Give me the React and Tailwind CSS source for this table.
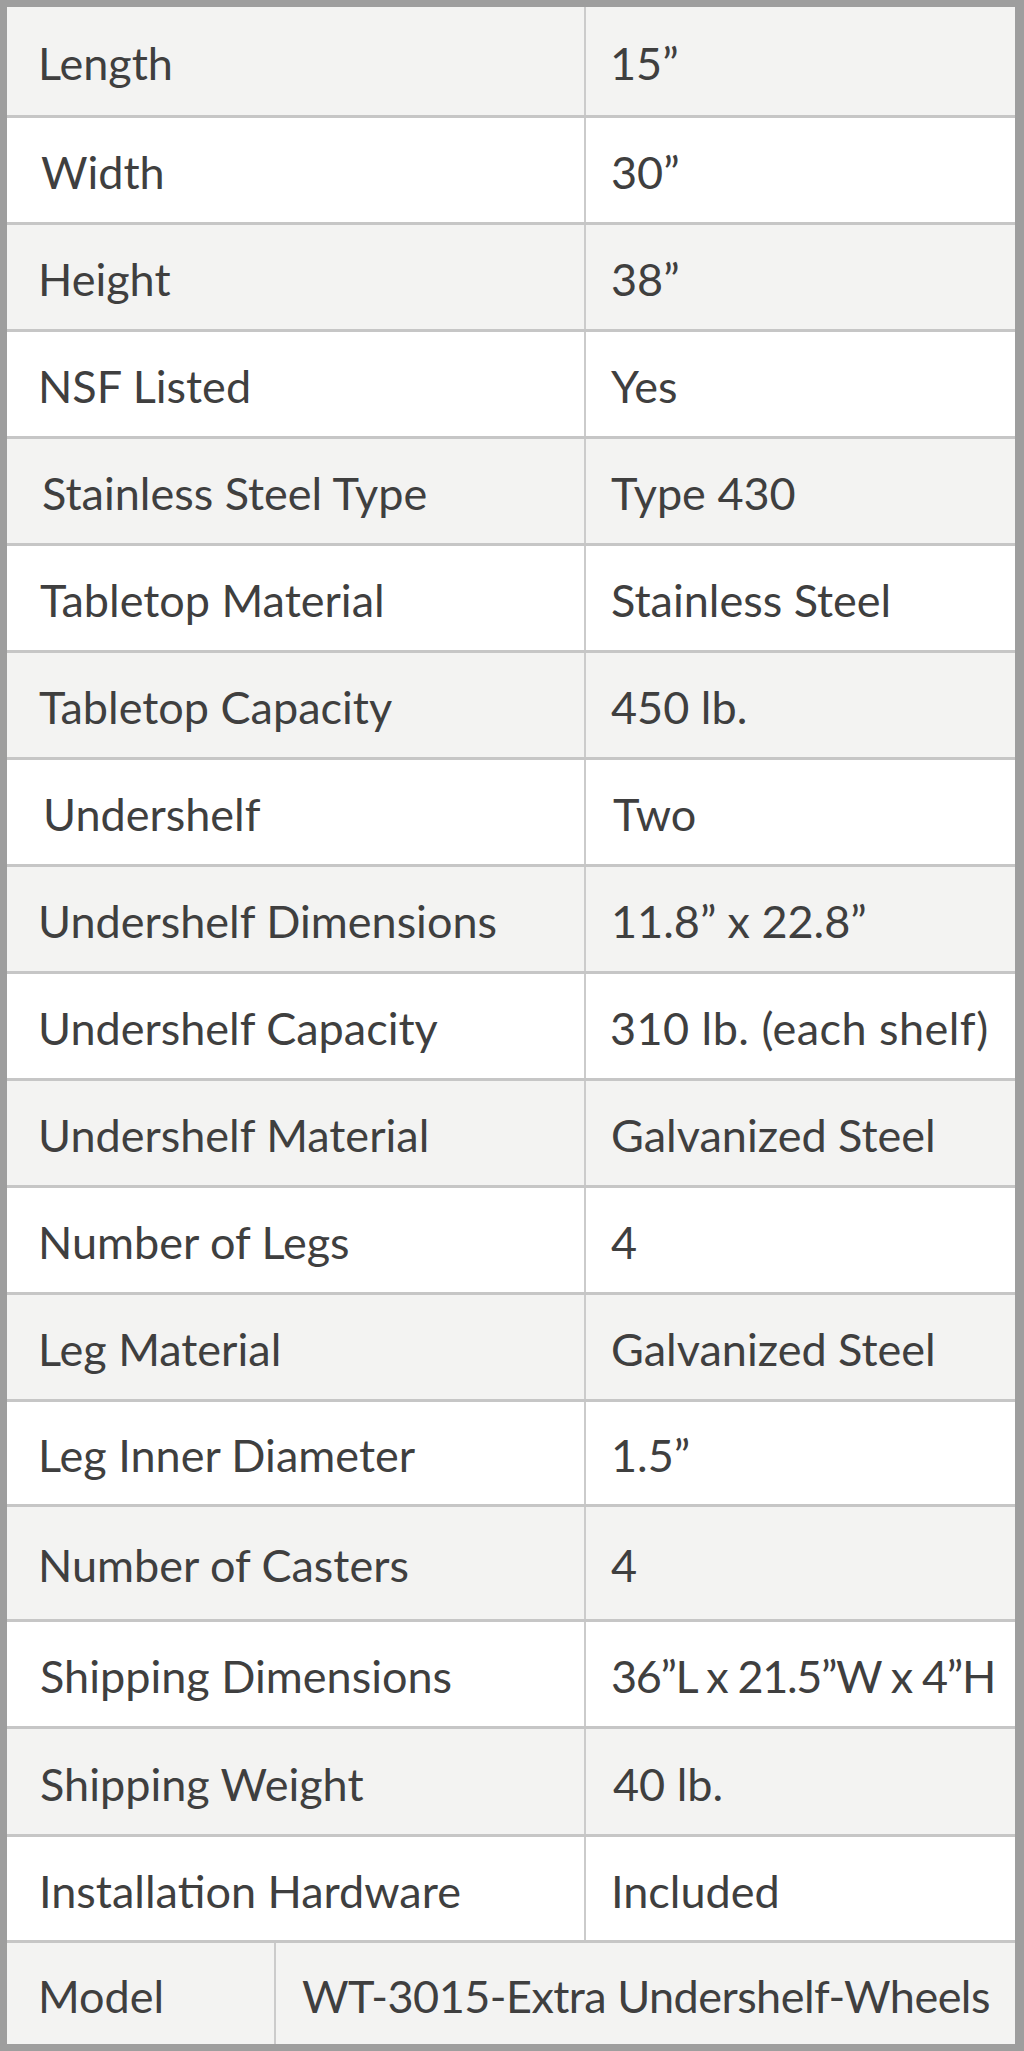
import React from "react";

// spec rows: label, value, row height (incl. 3px rule), label / value indent
const rows = [
  { label: "Length", value: "15\u201D", h: "h-[111px]", pl: "pl-[31px]", vl: "pl-[24px]" },
  { label: "Width", value: "30\u201D", h: "h-[107px]", pl: "pl-[34px]", vl: "pl-[25px]" },
  { label: "Height", value: "38\u201D", h: "h-[107px]", pl: "pl-[31px]", vl: "pl-[25px]" },
  { label: "NSF Listed", value: "Yes", h: "h-[107px]", pl: "pl-[31px]", vl: "pl-[25px]" },
  { label: "Stainless Steel Type", value: "Type 430", h: "h-[107px]", pl: "pl-[35px]", vl: "pl-[25px]" },
  { label: "Tabletop Material", value: "Stainless Steel", h: "h-[107px]", pl: "pl-[33px]", vl: "pl-[25px]" },
  { label: "Tabletop Capacity", value: "450 lb.", h: "h-[107px]", pl: "pl-[32px]", vl: "pl-[25px]" },
  { label: "Undershelf", value: "Two", h: "h-[107px]", pl: "pl-[36px]", vl: "pl-[27px]" },
  { label: "Undershelf Dimensions", value: "11.8\u201D x 22.8\u201D", h: "h-[107px]", pl: "pl-[31px]", vl: "pl-[25px]" },
  { label: "Undershelf Capacity", value: "310 lb. (each shelf)", h: "h-[107px]", pl: "pl-[31px]", vl: "pl-[24px] tracking-[0.01em]" },
  { label: "Undershelf Material", value: "Galvanized Steel", h: "h-[107px]", pl: "pl-[31px]", vl: "pl-[25px]" },
  { label: "Number of Legs", value: "4", h: "h-[107px]", pl: "pl-[31px]", vl: "pl-[25px]" },
  { label: "Leg Material", value: "Galvanized Steel", h: "h-[107px]", pl: "pl-[31px]", vl: "pl-[25px]" },
  { label: "Leg Inner Diameter", value: "1.5\u201D", h: "h-[105px]", pl: "pl-[31px]", vl: "pl-[25px]" },
  { label: "Number of Casters", value: "4", h: "h-[115px]", pl: "pl-[31px]", vl: "pl-[25px]" },
  { label: "Shipping Dimensions", value: "36\u201DL x 21.5\u201DW x 4\u201DH", h: "h-[107px]", pl: "pl-[33px]", vl: "pl-[25px] tracking-[-0.03em]" },
  { label: "Shipping Weight", value: "40 lb.", h: "h-[108px]", pl: "pl-[33px]", vl: "pl-[27px]" },
  { label: "Installation Hardware", value: "Included", h: "h-[106px]", pl: "pl-[32px]", vl: "pl-[25px]" },
];

const App = () => {
  return (
    <div
      className="w-[1024px] h-[2051px] bg-white border-t-[7px] border-l-[7px] border-r-[9px] border-b-[7px] border-[#9e9e9e] flex flex-col text-[45px] text-[#3f3f3f]"
      style={{ fontFamily: "Lato, 'Open Sans', sans-serif" }}
    >
      {rows.map(({ label, value, h, pl, vl }, i) => (
        <div
          key={label}
          className={`flex shrink-0 ${h} border-b-[3px] border-[#c6c6c6] ${i % 2 === 0 ? "bg-[#f3f3f2]" : "bg-white"}`}
        >
          <div className={`w-[577px] shrink-0 flex items-center pt-[6px] ${pl}`}>{label}</div>
          <div className={`flex-1 flex items-center pt-[6px] border-l-2 border-[#cbcbcb] whitespace-nowrap ${vl}`}>{value}</div>
        </div>
      ))}
      <div className="flex flex-1 bg-[#f3f3f2]">
        <div className="w-[267px] shrink-0 flex items-center pt-[6px] pl-[31px]">Model</div>
        <div className="flex-1 flex items-center pt-[6px] border-l-2 border-[#cbcbcb] whitespace-nowrap pl-[26px] tracking-[-0.012em]">
          WT-3015-Extra Undershelf-Wheels
        </div>
      </div>
    </div>
  );
};

export default App;
